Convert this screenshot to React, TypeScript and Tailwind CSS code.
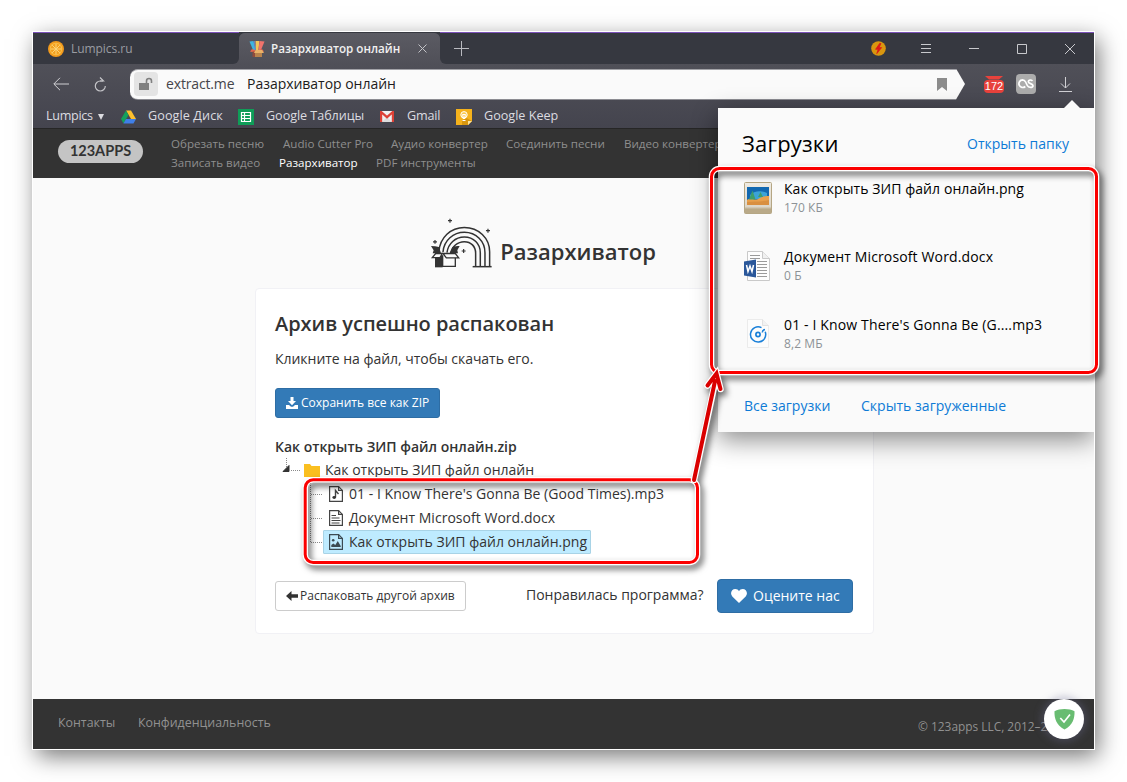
import React from 'react';

const navTop = [
  { label: 'Обрезать песню', width: 'w-[112px]' },
  { label: 'Audio Cutter Pro', width: 'w-[108px]' },
  { label: 'Аудио конвертер', width: 'w-[115px]' },
  { label: 'Соединить песни', width: 'w-[118px]' },
  { label: 'Видео конвертер', width: 'w-[118px]' },
];

const navBottom = [
  { label: 'Записать видео', width: 'w-[108px]' },
  { label: 'Разархиватор', width: 'w-[97px]', active: true },
  { label: 'PDF инструменты', width: 'w-[120px]' },
];

/* ---------- icons ---------- */

const OrangeIcon = () => (
  <svg width="16" height="16" viewBox="0 0 16 16">
    <circle cx="8" cy="8" r="8" fill="#f29a1c" />
    <circle cx="8" cy="8" r="6.2" fill="#f9c04a" />
    <circle cx="8" cy="8" r="5.4" fill="#f3a01f" />
    <path d="M8 2.6v10.8M2.6 8h10.8M4.2 4.2l7.6 7.6M11.8 4.2l-7.6 7.6" stroke="#fbd47a" strokeWidth="1" />
  </svg>
);

const BoxFavicon = () => (
  <svg width="16" height="16" viewBox="0 0 16 16">
    <path d="M.5.5L4.500 0 7 9H4z" fill="#3fb5e0" />
    <path d="M4.500 0H6l1.500 9H6z" fill="#6d7fb8" />
    <path d="M6.500 0h3.800L9.500 9H7z" fill="#f3c558" />
    <path d="M10.500 0l5 .5L12 9H9.500z" fill="#f0736c" />
    <path d="M1 10.500L3 8l3 1v2H3zM15 10.500L13 8l-3 1v2h3z" fill="#e2654f" />
    <path d="M3.500 10.500H7V16H3.500z" fill="#8f4a3c" />
    <path d="M6 10.500h7V16H6z" fill="#b8834c" />
    <path d="M5 12l1.500-3h6.500l2 3z" fill="#e9b268" />
  </svg>
);

const BoltIcon = () => (
  <svg width="15" height="15" viewBox="0 0 15 15">
    <circle cx="7.500" cy="7.500" r="7.300" fill="#d9960f" />
    <path d="M8.800 2.300L4.600 8.300h2.600L5.800 12.600l4.800-6H8l1.900-4z" fill="#dd1818" stroke="#dd1818" strokeWidth=".8" />
  </svg>
);

const DriveIcon = () => (
  <svg width="15" height="14" viewBox="0 0 15 14">
    <path d="M5 .5h5l5 8.500h-5z" fill="#fdbf2d" />
    <path d="M5 .5L0 9l2.500 4.500L7.500 5z" fill="#14a05c" />
    <path d="M5 9h10l-2.500 4.500h-10z" fill="#3f7fe8" />
  </svg>
);

const SheetsIcon = () => (
  <svg width="16" height="16" viewBox="0 0 16 16">
    <path d="M0 0h16v16H0z" fill="#0f9d58" />
    <path d="M3.500 3.500h9v9h-9zM3.500 6.500h9M3.500 9.500h9M6.500 3.500v9" fill="none" stroke="#fff" strokeWidth="1.200" />
  </svg>
);

const GmailIcon = () => (
  <svg width="14" height="11" viewBox="0 0 14 11">
    <path d="M0 0h14v11H0z" fill="#f0f0f0" />
    <path d="M2 11l5-5 5 5z" fill="#dcdcdc" />
    <path d="M1.100 11V1L7 6.200 12.900 1v10" fill="none" stroke="#dd4136" strokeWidth="2.200" />
  </svg>
);

const KeepIcon = () => (
  <svg width="16" height="16" viewBox="0 0 16 16">
    <path d="M0 0h16v12l-4 4H0z" fill="#f5b21c" />
    <path d="M10.500 9L16 12l-4 4H6V11.500z" fill="#d8960f" />
    <path d="M16 12l-4 4v-4z" fill="#fbe3a0" />
    <circle cx="8" cy="5.800" r="3.200" fill="#fbc94e" stroke="#fff" strokeWidth="1" />
    <path d="M7 7l-.5-1.500h3L9 7v2.500H7zM6.500 11.500h3" fill="none" stroke="#fff" strokeWidth="1" />
  </svg>
);

const RainbowLogo = () => (
  <svg width="63.300" height="51.700" viewBox="30 35 190 155" fill="none" stroke="#333" strokeWidth="4.500">
    <path d="M57 138C60 97 92 66.500 133 66.500c43 0 76 32 76 73V184" />
    <path d="M69 140C72 105 100 81 133 81c36 0 62 27 62 61v42" />
    <path d="M81 142C84 115 106 95 133 95c28 0 48 20 48 47v42" />
    <path d="M92 145C96 124 112 109 133 109c20 0 34 14 34 35v40" />
    <path d="M158 184h57" />
    <path d="M33 122c8 0 16 2 24 3l6 19H38l3-9zM119 122c-8 0-15 2-22 3l-8 19h25l-2-9z" fill="#333" stroke="none" />
    <path d="M45 150h23v36H45z" fill="#333" stroke="none" />
    <path d="M68 150v33h38v-27" fill="#fafafa" strokeWidth="4" />
    <path d="M69 144.500h37l10 13H79z" fill="#fafafa" strokeWidth="4" />
    <path d="M47 144.500h20l-7 12.500H37z" fill="#fafafa" strokeWidth="4" />
    <path d="M90 40v12M84 46h12M204 70v12M198 76h12M45 104v11M39 109.500h12M131 131v12M125 137h12" strokeWidth="3.500" />
  </svg>
);

const NoteFile = () => (
  <svg width="14" height="16" viewBox="0 0 14 16" fill="none" stroke="#444" strokeWidth="1.200">
    <path d="M.6.6h9l3.800 3.800v11H.6z" />
    <path d="M9.600.6v3.800h3.800" />
    <path d="M6.500 11.500V4.500l3 3.500" strokeWidth="1.400" />
    <ellipse cx="5.200" cy="11.500" rx="1.800" ry="1.400" fill="#333" stroke="none" />
  </svg>
);

const TextFile = () => (
  <svg width="14" height="16" viewBox="0 0 14 16" fill="none" stroke="#444" strokeWidth="1.200">
    <path d="M.6.6h9l3.800 3.800v11H.6z" />
    <path d="M9.600.6v3.800h3.800" />
    <path d="M2.500 5.500h4.500M2.500 8h8M2.500 10.500h9M2.500 13h8" strokeWidth="1.100" />
  </svg>
);

const ImageFile = () => (
  <svg width="14" height="16" viewBox="0 0 14 16" fill="none" stroke="#3c4a52" strokeWidth="1.200">
    <path d="M.6.6h9l3.800 3.800v11H.6z" />
    <path d="M9.600.6v3.800h3.800" />
    <circle cx="4.200" cy="6.300" r="1.300" fill="#3c4a52" stroke="none" />
    <path d="M2.300 13V11l2-1.500 2 1.500 2.500-4L11.700 12v1z" fill="#3c4a52" stroke="none" />
  </svg>
);

const PictureIcon = () => (
  <svg width="28" height="32" viewBox="0 0 28 32">
    <defs>
      <linearGradient id="paper" x1="0" y1="0" x2="0" y2="1">
        <stop offset="0" stopColor="#f0ece4" />
        <stop offset=".78" stopColor="#ddd6c8" />
        <stop offset=".86" stopColor="#b9a988" />
      </linearGradient>
    </defs>
    <rect x=".5" y=".5" width="27" height="31" rx="1" fill="url(#paper)" stroke="#b5a684" />
    <path d="M3 5h22v18H3z" fill="#1268b0" />
    <path d="M6 13c3-4 12-5 17-2v6H6z" fill="#3ba3d8" />
    <path d="M3 18c5-3 8 1 11-1s6-3 11-3v9H3z" fill="#e8a04c" />
    <path d="M3 20c6-1 14 0 22-2v5H3z" fill="#d98f40" />
    <path d="M5 17.500l3.500-9 3 9zM14 15l2.500-5 2.500 5z" fill="#3f9e6a" />
  </svg>
);

const WordIcon = () => (
  <svg width="28" height="32" viewBox="0 0 28 32">
    <path d="M3.500 1.500h15l7 7v22h-22z" fill="#fdfdfd" stroke="#c9c9c9" />
    <path d="M18.500 1.500v7h7" fill="#f0f0f0" stroke="#c9c9c9" />
    <path d="M6 5.500h10M6 8.500h10M13 11.500h10M13 14.500h10M13 17.500h10M13 20.500h10M13 23.500h10M13 26.500h10" stroke="#9a9a9a" />
    <path d="M0 11.500l12-2v18l-12-2z" fill="#2a579a" />
    <path d="M2.500 15l1.500 6.500 2-5.500 2 5.500L9.500 15" fill="none" stroke="#fff" strokeWidth="1.500" />
  </svg>
);

const AudioIcon = () => (
  <svg width="28" height="32" viewBox="0 0 28 32" fill="none">
    <path d="M3.500 1.500h15l6 6v22h-21z" fill="#fcfcfc" stroke="#ebebeb" />
    <path d="M18.500 1.500v6h6" fill="#f2f2f2" stroke="#e2e2e2" />
    <path d="M17.500 9.700A7.600 7.600 0 1 0 21.200 13.800" stroke="#1a80d9" strokeWidth="1.500" />
    <circle cx="14" cy="16.500" r="2.100" stroke="#1a80d9" strokeWidth="1.700" />
    <path d="M18.300 14.500c0-2 .8-2.800 2.700-3" stroke="#1a80d9" strokeWidth="1.500" />
  </svg>
);

const downloads = [
  { name: 'Как открыть ЗИП файл онлайн.png', size: '170 КБ', icon: <PictureIcon />, tracking: 'tracking-[0.08px]' },
  { name: 'Документ Microsoft Word.docx', size: '0 Б', icon: <WordIcon />, tracking: 'tracking-[0.14px]' },
  { name: "01 - I Know There's Gonna Be (G....mp3", size: '8,2 МБ', icon: <AudioIcon />, tracking: 'tracking-[0.14px]' },
];

/* ---------- browser chrome ---------- */

const TabBar = () => (
  <div className="flex h-8 border-t border-[#7b52b9] bg-[#505058]">
    <div className="flex w-[206px] items-center gap-[7px] rounded-br-md bg-[#363840] pl-[15px] text-xs tracking-[-0.05px] text-[#9a9ca2]">
      <OrangeIcon />
      Lumpics.ru
    </div>
    <div className="flex w-[201px] items-center rounded-t-md bg-gradient-to-b from-[#5b5b63] to-[#505058] pl-2.5 text-[11.650px] font-semibold text-[#f0f0f0] shadow-[0_-6px_0_0_#363840]">
      <BoxFavicon />
      <span className="ml-1.5 w-[147px] whitespace-nowrap">Разархиватор онлайн</span>
      <svg width="9" height="9" viewBox="0 0 9 9" stroke="#c4c4c8"><path d="M.5.5l8 8M8.500.5l-8 8" /></svg>
    </div>
    <div className="flex flex-1 items-center rounded-bl-md bg-[#363840]">
      <svg className="ml-3.5" width="15" height="15" viewBox="0 0 15 15" stroke="#b9bac0"><path d="M7.500 0v15M0 7.500h15" /></svg>
      <div className="ml-auto flex h-full items-center">
        <span className="flex w-12 justify-center pb-px"><BoltIcon /></span>
        <svg width="48" height="30" viewBox="0 0 48 30" stroke="#c8c9cd"><path d="M19 10.500h10M19 14.500h10M19 18.500h10" /></svg>
        <svg width="48" height="30" viewBox="0 0 48 30" stroke="#c8c9cd"><path d="M19 14.500h10" /></svg>
        <svg width="48" height="30" viewBox="0 0 48 30" stroke="#c8c9cd" fill="none"><path d="M19.500 10.500h9v9h-9z" /></svg>
        <svg width="48" height="30" viewBox="0 0 48 30" stroke="#c8c9cd"><path d="M19 10l10 10M29 10l-10 10" /></svg>
      </div>
    </div>
  </div>
);

const Toolbar = () => (
  <div className="flex h-10 items-center pl-5">
    <svg width="16" height="14" viewBox="0 0 16 14" fill="none" stroke="#cfcfd3"><path d="M16 7H1M7 .8L.8 7 7 13.200" /></svg>
    <svg className="ml-[25px]" width="13" height="15" viewBox="0 0 13 15" fill="none" stroke="#c4c4c8" strokeWidth="1.200">
      <path d="M9 4H6.300a5 5 0 1 0 5 5" />
      <path d="M6 .5L9.500 4H6" />
    </svg>
    <div className="ml-[23px] flex h-[31px] w-[835px] items-center rounded-l-lg border-y border-[#a3a3a8] bg-[#fafafa] pl-1 text-sm [clip-path:polygon(0_0,826px_0,835px_50%,826px_100%,0_100%)]">
      <span className="flex h-6 w-6 items-center justify-center rounded-sm bg-[#e4e4e4]">
        <svg width="14" height="14" viewBox="0 0 14 14">
          <path d="M0 6h10v7H0z" fill="#808080" />
          <path d="M7.500 7V4a2.500 2.500 0 0 1 5 0v2" fill="none" stroke="#808080" strokeWidth="1.600" />
        </svg>
      </span>
      <span className="ml-2 w-[81px] tracking-[-0.15px] text-[#45454a]">extract.me</span>
      <span className="tracking-[-0.03px] text-[#1c1c1c]">Разархиватор онлайн</span>
      <svg className="mr-[18px] ml-auto" width="10" height="13" viewBox="0 0 10 13"><path d="M0 0h10v13L5 9l-5 4z" fill="#8c8c8c" /></svg>
    </div>
    <div className="ml-[19px] flex h-[17px] w-5 flex-col text-center font-['Liberation_Sans',sans-serif] text-[11px] leading-[13px] text-white">
      <svg width="20" height="4" viewBox="0 0 20 4" className="shrink-0"><path d="M1 0h18l-4 3.500H5z" fill="#e8423c" /></svg>
      <span className="h-[13px] rounded-sm bg-[#e8423c]">172</span>
    </div>
    <div className="ml-3 flex h-5 w-5 items-center justify-center rounded-sm bg-[#acacac]">
      <svg width="16" height="10" viewBox="0 0 16 10" fill="none" stroke="#fff" strokeWidth="1.700">
        <path d="M14.500 1.800C13 .5 10.300.8 10.300 2.700c0 2.200 4.700 1.600 4.700 4 0 2.300-4.500 2.300-5.700-.2L7.600 3C6.600 1 5.500.9 4.500.9a3.800 3.800 0 1 0 2.800 6.600" />
      </svg>
    </div>
    <svg className="ml-[23px]" width="13" height="15" viewBox="0 0 13 15" fill="none" stroke="#d0d0d4"><path d="M6.500 0v11M2 6.500L6.500 11 11 6.500M0 14.500h13" /></svg>
  </div>
);

const Bookmarks = () => (
  <div className="flex h-6 items-center pt-px pl-[13px] text-[12.600px] whitespace-nowrap text-[#dcdce0]">
    <span className="w-[52px] tracking-[-0.3px]">Lumpics</span>
    <svg width="6" height="6" viewBox="0 0 6 6"><path d="M0 0h6L3 6z" fill="#dcdce0" /></svg>
    <span className="ml-[17px]"><DriveIcon /></span>
    <span className="ml-3 w-[90px] tracking-[0.1px]">Google Диск</span>
    <SheetsIcon />
    <span className="ml-3 w-[114px] tracking-[-0.05px]">Google Таблицы</span>
    <GmailIcon />
    <span className="ml-[13px] w-[49px] tracking-[-0.2px]">Gmail</span>
    <KeepIcon />
    <span className="ml-3">Google Keep</span>
  </div>
);

/* ---------- site ---------- */

const SiteHeader = () => (
  <div className="flex h-[50px] items-start border-t border-[#262626] bg-[#333] pl-[25px] text-[11.600px] whitespace-nowrap text-[#8e8e8e]">
    <span className="mt-[11px] flex h-[23px] w-[85px] items-center justify-center rounded-full bg-[#c4c4c4] pb-px font-['Lato',sans-serif] text-[14.500px] font-bold text-[#333]">
      123APPS
    </span>
    <div className="mt-[5px] ml-7">
      <div className="flex h-[19px] items-center">
        {navTop.map((n) => <span key={n.label} className={n.width}>{n.label}</span>)}
      </div>
      <div className="flex h-[19px] items-center">
        {navBottom.map((n) => (
          <span key={n.label} className={`${n.width} ${n.active ? 'text-white' : ''}`}>{n.label}</span>
        ))}
      </div>
    </div>
  </div>
);

const FileTree = () => (
  <div className="relative pt-px text-sm whitespace-nowrap">
    <svg className="absolute top-0 left-0" width="50" height="90" viewBox="0 0 50 90" fill="none" stroke="#8a8a8a" strokeDasharray="1 1">
      <path d="M11.500 1v9M16 13.500h9M35.500 24v61M36 37.500h12M36 61.500h12M36 85.500h12" />
      <path d="M14 8.500v6H8z" fill="#333" stroke="#333" strokeDasharray="none" />
    </svg>
    <div className="flex h-6 items-center pl-[29px]">
      <svg width="16" height="13" viewBox="0 0 16 13"><path d="M0 0h6l1.500 2H16v11H0z" fill="#fabf20" /></svg>
      <span className="ml-[5px]">Как открыть ЗИП файл онлайн</span>
    </div>
    <div className="flex h-6 items-center pl-[54px]"><NoteFile /><span className="ml-1.5 tracking-[0.03px]">01 - I Know There's Gonna Be (Good Times).mp3</span></div>
    <div className="flex h-6 items-center pl-[54px]"><TextFile /><span className="ml-1.5 tracking-[0.03px]">Документ Microsoft Word.docx</span></div>
    <div className="ml-12 flex h-6 w-[268px] items-center rounded-[1px] border border-[#a8d3e6] bg-[#beebff] pl-[5px]">
      <ImageFile />
      <span className="ml-1.5 tracking-[0.02px]">Как открыть ЗИП файл онлайн.png</span>
    </div>
  </div>
);

const Card = () => (
  <div className="ml-[222px] h-[346px] w-[619px] rounded border border-[#f1f1f5] bg-white pt-5 pr-[19px] pl-[19px]">
    <h2 className="text-xl leading-[30px] font-semibold tracking-[-0.03px]">Архив успешно распакован</h2>
    <p className="mt-2.5 text-sm leading-5 tracking-[-0.03px]">Кликните на файл, чтобы скачать его.</p>
    <button className="mt-[19px] flex h-[30px] w-[165px] items-center rounded-[3px] border border-[#2e6da4] bg-[#337ab7] pl-2.5 text-xs whitespace-nowrap text-white">
      <svg width="12" height="12" viewBox="0 0 12 12" fill="#fff">
        <path d="M4.500 0h3v4H10L6 8.300 2 4h2.500z" />
        <path d="M0 8h3l2 1.800h2L9 8h3v4H0z" />
      </svg>
      <span className="ml-[3px]">Сохранить все как ZIP</span>
    </button>
    <div className="mt-[19px] text-sm leading-5 font-semibold">Как открыть ЗИП файл онлайн.zip</div>
    <FileTree />
    <div className="mt-[25px] flex items-center text-sm whitespace-nowrap">
      <button className="flex h-[30px] w-[191px] items-center rounded-[3px] border border-[#ccc] bg-white pl-2.5 text-xs">
        <svg width="12" height="10" viewBox="0 0 12 10" fill="#333"><path d="M5.500 0v3.300H12v3.400H5.500V10L0 5z" /></svg>
        <span className="ml-0.5">Распаковать другой архив</span>
      </button>
      <span className="ml-[60px] w-[191px] pb-0.5">Понравилась программа?</span>
      <button className="flex h-[34px] w-[136px] items-center rounded border border-[#2e6da4] bg-[#337ab7] pl-[13px] text-white">
        <svg width="16" height="14" viewBox="0 0 16 14" fill="#fff"><path d="M8 14L1.300 7.500C-1.500 4.200.8 0 4.200 0 6 0 7.300.9 8 2.300 8.700.9 10 0 11.800 0c3.400 0 5.700 4.200 2.900 7.500z" /></svg>
        <span className="ml-1.5">Оцените нас</span>
      </button>
    </div>
  </div>
);

const DownloadsPopup = () => (
  <div className="absolute top-[76px] left-[685px] h-[324px] w-[376px] bg-[#fafafa] whitespace-nowrap shadow-[0_8px_24px_0_rgba(0,0,0,0.45)]">
    <svg className="absolute -top-2 left-[346px]" width="16" height="8" viewBox="0 0 16 8"><path d="M0 8l8-8 8 8z" fill="#fafafa" /></svg>
    <div className="flex h-[60px] items-center justify-between pt-3 pr-[25px] pl-6">
      <h3 className="pb-0.5 text-[22px] leading-[30px] tracking-[0.2px] text-black">Загрузки</h3>
      <a className="text-sm text-[#0d7ad6]">Открыть папку</a>
    </div>
    <div className="h-[204px] pt-[11px]">
      {downloads.map((d) => (
        <div key={d.name} className="flex h-[68px] pl-[26px]">
          <span className="pt-[3px]">{d.icon}</span>
          <div className="ml-3">
            <div className={`text-sm leading-5 text-black ${d.tracking}`}>{d.name}</div>
            <div className="text-xs leading-[18px] tracking-[0.1px] text-[#8d9296]">{d.size}</div>
          </div>
        </div>
      ))}
    </div>
    <div className="flex pt-6 pl-[26px] text-sm leading-5 text-[#0d7ad6]">
      <a className="w-[117px]">Все загрузки</a>
      <a className="tracking-[0.03px]">Скрыть загруженные</a>
    </div>
  </div>
);

const SiteFooter = () => (
  <div className="relative flex h-[50px] bg-[#333] text-[12.400px] whitespace-nowrap text-[#919191]">
    <a className="ml-[25px] w-20 pt-[15px]">Контакты</a>
    <a className="pt-[15px]">Конфиденциальность</a>
    <span className="ml-auto w-[176px] overflow-hidden pt-[19px] text-[11.900px]">© 123apps LLC, 2012–2019</span>
    <div className="absolute top-0 right-[10px] flex h-10 w-10 items-center justify-center rounded-full bg-white shadow-[0_0_8px_2px_rgba(110,110,150,0.4)]">
      <svg width="21" height="21" viewBox="0 0 21 21">
        <path d="M10.500 0C14 0 18 .8 20.500 2.200 20.800 9 19 16 10.500 20.500 2 16 .2 9 .5 2.200 3 .8 7 0 10.500 0z" fill="#68bc71" />
        <path d="M6.300 9l3.700 4 6-7.500" fill="none" stroke="#fff" strokeWidth="1.700" />
      </svg>
    </div>
  </div>
);

/* Red frames and the arrow drawn on top of the window */
const Callouts = () => (
  <svg className="pointer-events-none absolute inset-0 [filter:drop-shadow(3px_4px_3px_rgba(0,0,0,0.6))]" width="1127" height="782" viewBox="0 0 1127 782" fill="none">
    <g stroke="#fff" strokeWidth="5.500">
      <rect x="711.500" y="168.500" width="385" height="204" rx="8" />
      <rect x="305.200" y="479.800" width="392.300" height="82.700" rx="8" />
    </g>
    <g stroke="#fb0000" strokeWidth="3">
      <rect x="711.500" y="168.500" width="385" height="204" rx="8" />
      <rect x="305.200" y="479.800" width="392.300" height="82.700" rx="8" />
    </g>
    <path d="M694 480l20.500-95M707.500 385.500l9-12 4 15.500" stroke="#fff" strokeWidth="6.500" strokeLinecap="round" />
    <path d="M694 480l21-99M707.500 385.500l9-12 4 15.500" stroke="#da0000" strokeWidth="4" strokeLinecap="round" />
  </svg>
);

export default function App() {
  return (
    <div className="relative h-[782px] w-[1127px] overflow-hidden bg-white pt-8 pl-[33px] font-['Open_Sans',sans-serif] text-[#333]">
      <div className="h-[717px] w-[1061px] shadow-[0_0_0_1px_#fff,4px_7px_22px_0_rgba(0,0,0,0.55)]">
        <div className="relative flex h-full flex-col overflow-hidden bg-[#fafafa]">
          <TabBar />
          <div className="bg-gradient-to-b from-[#505058] to-[#44444e]">
            <Toolbar />
            <Bookmarks />
          </div>
          <SiteHeader />
          <div className="h-[521px]">
            <div className="flex h-[110px] pt-[39px] pl-[397px]">
              <RainbowLogo />
              <h1 className="mt-[19px] ml-[7px] text-[22px] leading-[30px] font-semibold">Разархиватор</h1>
            </div>
            <Card />
          </div>
          <SiteFooter />
          <DownloadsPopup />
        </div>
      </div>
      <Callouts />
    </div>
  );
}
